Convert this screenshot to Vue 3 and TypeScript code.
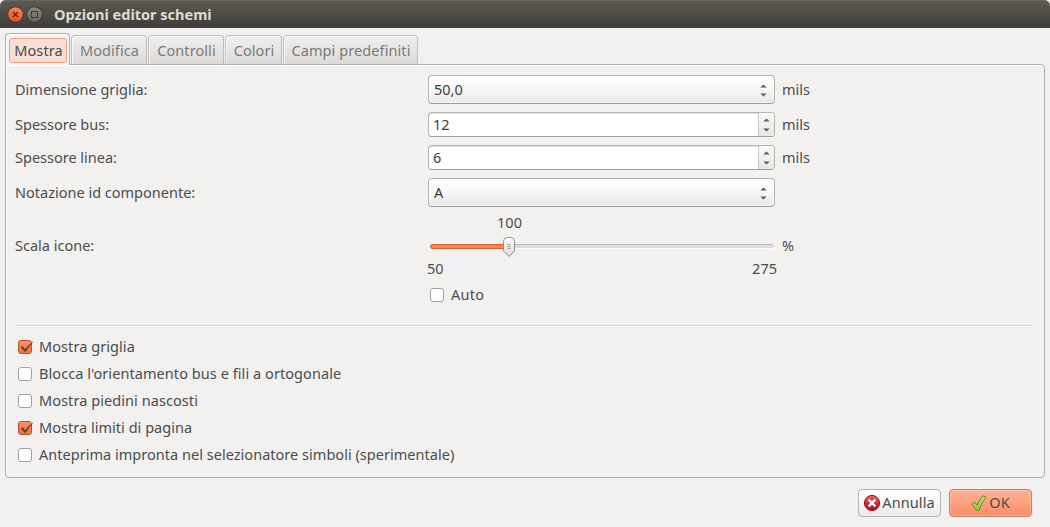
<script setup lang="ts">
import { ref } from 'vue'

interface Tab { key: string; label: string }
interface Field { key: string; label: string; value: string; kind: 'combo' | 'spin'; unit?: string }
interface Option { key: string; label: string; checked: boolean }

const tabs: Tab[] = [
  { key: 'mostra', label: 'Mostra' },
  { key: 'modifica', label: 'Modifica' },
  { key: 'controlli', label: 'Controlli' },
  { key: 'colori', label: 'Colori' },
  { key: 'campi', label: 'Campi predefiniti' },
]
const active = ref('mostra')

const fields: Field[] = [
  { key: 'griglia', label: 'Dimensione griglia:', value: '50,0', kind: 'combo', unit: 'mils' },
  { key: 'bus', label: 'Spessore bus:', value: '12', kind: 'spin', unit: 'mils' },
  { key: 'linea', label: 'Spessore linea:', value: '6', kind: 'spin', unit: 'mils' },
  { key: 'notazione', label: 'Notazione id componente:', value: 'A', kind: 'combo' },
]

const auto = ref(false)
const options = ref<Option[]>([
  { key: 'o-griglia', label: 'Mostra griglia', checked: true },
  { key: 'o-blocca', label: "Blocca l'orientamento bus e fili a ortogonale", checked: false },
  { key: 'o-piedini', label: 'Mostra piedini nascosti', checked: false },
  { key: 'o-limiti', label: 'Mostra limiti di pagina', checked: true },
  { key: 'o-anteprima', label: 'Anteprima impronta nel selezionatore simboli (sperimentale)', checked: false },
])
</script>

<template>
  <div class="window">
    <header class="titlebar">
      <svg class="controls" width="42" height="20" viewBox="0 0 42 20">
        <defs>
          <linearGradient id="close-fill" x1="0" y1="0" x2="0" y2="1">
            <stop offset="0" stop-color="#f58560" /><stop offset="1" stop-color="#e2501f" />
          </linearGradient>
          <linearGradient id="max-fill" x1="0" y1="0" x2="0" y2="1">
            <stop offset="0" stop-color="#8b887f" /><stop offset="1" stop-color="#6a675f" />
          </linearGradient>
        </defs>
        <circle cx="10.5" cy="10.5" r="8" fill="#34332f" />
        <circle cx="10.5" cy="10.5" r="7.3" fill="url(#close-fill)" />
        <path d="M8 8l5 5M13 8l-5 5" stroke="#5a2412" stroke-width="1.3" />
        <circle cx="29.5" cy="10.5" r="8" fill="#34332f" />
        <circle cx="29.5" cy="10.5" r="7.3" fill="url(#max-fill)" />
        <rect x="26.5" y="7.5" width="6" height="6" fill="none" stroke="#3b3935" />
      </svg>
      <h1 class="title">Opzioni editor schemi</h1>
    </header>

    <main class="content">
      <nav class="tabs">
        <button
          v-for="t in tabs" :key="t.key" type="button"
          :class="['tab', t.key, { active: active === t.key }]" @click="active = t.key"
        >
          <span class="tab-label">{{ t.label }}</span>
        </button>
      </nav>

      <section class="panel">
        <div class="form">
          <div v-for="f in fields" :key="f.key" :class="['row', f.kind]">
            <span class="label">{{ f.label }}</span>
            <div class="control">
              <span class="value">{{ f.value }}</span>
              <span class="stepper">
                <svg v-if="f.kind === 'combo'" width="7" height="13" viewBox="0 0 7 13">
                  <path d="M.3 3.6L3.5.4 6.7 3.6zM.3 9.4h6.4L3.5 12.6z" fill="#5c5c5c" />
                </svg>
                <svg v-else width="7" height="14" viewBox="0 0 7 14">
                  <path d="M.3 3.6L3.5.4 6.7 3.6zM.3 10.4h6.4L3.5 13.6z" fill="#5c5c5c" />
                </svg>
              </span>
            </div>
            <span v-if="f.unit" class="unit">{{ f.unit }}</span>
          </div>

          <div class="row scale">
            <span class="label">Scala icone:</span>
            <div class="slider">
              <div class="current">100</div>
              <svg class="track" width="347" height="23" viewBox="0 0 347 23">
                <defs>
                  <linearGradient id="thumb-fill" x1="0" y1="0" x2="0" y2="1">
                    <stop offset="0" stop-color="#ffffff" /><stop offset="1" stop-color="#dddbd9" />
                  </linearGradient>
                </defs>
                <rect x="2" y="9" width="344" height="4.5" rx="2" fill="#dedcda" />
                <path d="M4 9.5h341" stroke="#bdbab7" />
                <path d="M4 13.5h341" stroke="#fbfbfa" />
                <rect x="2.5" y="9.5" width="80" height="4" rx="2" fill="#f78557" stroke="#d9602f" />
                <path
                  d="M75.5 6.5Q75.5 2.5 79.5 2.5H82.5Q86.5 2.5 86.5 6.5V16L81 21.5 75.5 16Z"
                  fill="url(#thumb-fill)" stroke="#928f8c"
                />
                <path d="M79 9.5h4M79 11.5h4M79 13.5h4" stroke="#aaa7a4" />
              </svg>
              <div class="range"><span>50</span><span>275</span></div>
            </div>
            <span class="unit">%</span>
          </div>

          <label class="check auto">
            <input v-model="auto" type="checkbox">
            <span class="box" />
            <span class="text">Auto</span>
          </label>
        </div>

        <hr class="separator">

        <div class="options">
          <label v-for="o in options" :key="o.key" :class="['check', o.key]">
            <input v-model="o.checked" type="checkbox">
            <span :class="['box', { on: o.checked }]">
              <svg v-if="o.checked" width="16" height="15" viewBox="0 0 16 15">
                <path d="M2.6 7.2L4.8 6.2 7.1 9.3Q10.2 4.6 15.8 1.2 11.2 6 7.9 11.6L6.6 11.8Z" fill="#6b3a2b" />
              </svg>
            </span>
            <span class="text">{{ o.label }}</span>
          </label>
        </div>
      </section>

      <footer class="actions">
        <button type="button" class="btn cancel">
          <svg width="18" height="18" viewBox="0 0 18 18">
            <defs>
              <linearGradient id="stop-fill" x1="0" y1="0" x2="0" y2="1">
                <stop offset="0" stop-color="#ef6262" /><stop offset=".5" stop-color="#d02c3a" /><stop offset="1" stop-color="#a80f2c" />
              </linearGradient>
            </defs>
            <circle cx="9" cy="9" r="7.6" fill="url(#stop-fill)" stroke="#98162d" />
            <path d="M6.5 6.5l5 5M11.5 6.5l-5 5" stroke="#fff" stroke-width="2.4" stroke-linecap="square" />
          </svg>
          <span class="text">Annulla</span>
        </button>
        <button type="button" class="btn ok">
          <svg width="16" height="18" viewBox="0 0 16 18">
            <defs>
              <linearGradient id="ok-fill" x1="0" y1="0" x2="0" y2="1">
                <stop offset="0" stop-color="#d3e785" /><stop offset="1" stop-color="#98c53a" />
              </linearGradient>
            </defs>
            <path
              d="M1 10.2L4 8.2 6.2 11.3Q8.6 5.5 12 1.7L15 3.2Q10.4 8.2 8 16.2L5.3 16.4Z"
              fill="url(#ok-fill)" stroke="#628c20" stroke-linejoin="round"
            />
          </svg>
          <span class="text">OK</span>
        </button>
      </footer>
    </main>
  </div>
</template>

<style>
body { background: #f2f1f0; }
</style>

<style scoped>
* { box-sizing: border-box; }
.window {
  display: flex;
  flex-direction: column;
  width: 1050px;
  height: 527px;
  overflow: hidden;
  background: #f2f1f0;
  color: #4c4c4c;
  font: 14.5px/20px "Noto Sans", "Open Sans", sans-serif;
  white-space: nowrap;
}
button { margin: 0; color: inherit; font: inherit; }
.titlebar {
  display: flex;
  flex: none;
  align-items: center;
  gap: 7px;
  height: 28px;
  padding: 1px 0 0 5px;
  border-radius: 6px 6px 0 0;
  background: linear-gradient(#5d5a52, #3e3d39);
  box-shadow: inset 0 1px #6d6a61;
}
.controls { margin-top: -1px; }
.title { margin: 0; padding-bottom: 2px; color: #dfdbd2; font-size: 14.5px; font-weight: 700; line-height: 20px; }
.content { display: flex; flex: 1; flex-direction: column; padding: 5px 5px 0; }
.tabs { display: flex; align-items: flex-end; gap: 1px; height: 32px; margin-bottom: -1px; z-index: 1; }
.tab {
  height: 30px;
  padding: 0 0 0 1px;
  border: 1px solid #c0bebb;
  border-bottom-color: #b2afac;
  border-radius: 4px 4px 0 0;
  background: linear-gradient(#f0efee, #dcdad8);
  box-shadow: inset 1px 1px #f7f6f6;
  color: #7b7a78;
  letter-spacing: .08px;
  text-align: center;
}
.tab.active {
  height: 32px;
  padding: 3px 2px 2px;
  border-color: #b2afac;
  border-bottom: 0;
  background: #f5f4f3;
  box-shadow: inset 1px 1px #fff;
  color: #4c4c4c;
}
.tab-label { display: block; }
.active .tab-label {
  height: 25px;
  margin: 0 0 0 1px;
  padding-left: 1px;
  border: 1px solid #f0a083;
  border-radius: 3px;
  background: #f8ded5;
  line-height: 22px;
}
.mostra { width: 65px; }
.modifica { width: 76px; }
.controlli { width: 76px; }
.colori { width: 57px; }
.campi { width: 135px; }
.panel {
  height: 414px;
  padding: 10px 9px 0;
  border: 1px solid #b2afac;
  border-radius: 0 4px 4px 4px;
  box-shadow: inset 1px 1px #fff;
}
.form { display: flex; flex-direction: column; gap: 8px; }
.row { display: grid; grid-template-columns: 413px 347px auto; align-items: center; }
.combo { height: 29px; }
.spin { height: 25px; }
.label, .unit, .value, .text { padding-bottom: 2px; }
.control {
  display: flex;
  align-items: stretch;
  height: 100%;
  border: 1px solid #b5b2af;
  border-bottom-color: #9f9c99;
  border-radius: 4px;
  color: #3c3c3c;
}
.combo .control { background: linear-gradient(#fff, #f7f7f6 50%, #e9e8e7); box-shadow: inset 0 0 0 1px #ffffff80; }
.spin .control { background: #fff; box-shadow: inset 0 1px #e0dfde; }
.value { flex: 1; align-self: center; padding-left: 5px; }
.spin .value { padding-left: 4px; }
.stepper { display: flex; align-items: center; justify-content: center; width: 16px; }
.combo .stepper { width: 21px; padding-top: 1px; }
.spin .stepper { border-left: 1px solid #cbc9c6; border-radius: 0 3px 3px 0; background: linear-gradient(#fbfbfb, #e6e5e4); }
.unit { padding-left: 7px; }
.scale { height: 64px; }
.slider { display: flex; flex-direction: column; height: 64px; }
.current { width: 163px; height: 20px; margin-top: -3px; text-align: center; }
.track { display: block; margin-top: 3px; }
.range { display: flex; justify-content: space-between; margin: 0 -2px 0 -1px; }
.scale .label, .scale .unit { padding-bottom: 4px; }
.check { display: flex; align-items: center; gap: 7px; height: 20px; }
.check input { display: none; }
.box {
  display: block;
  flex: none;
  width: 14px;
  height: 14px;
  border: 1px solid #a3a09d;
  border-radius: 3px;
  background: #fff;
}
.box.on { border-color: #b6512d; background: linear-gradient(#f99168, #ee7241); }
.box svg { display: block; margin: -1px; overflow: visible; }
.auto { margin: -2px 0 0 415px; letter-spacing: .3px; }
.o-griglia, .o-piedini { letter-spacing: .07px; }
.o-blocca { letter-spacing: .065px; }
.o-limiti { letter-spacing: .03px; }
.o-anteprima { letter-spacing: .025px; }
.separator { height: 2px; margin: 20px 2px 0 1px; border: 0; border-top: 1px solid #d8d6d3; background: #fafafa; }
.options { display: flex; flex-direction: column; gap: 7px; padding: 10px 0 0 3px; }
.actions { display: flex; gap: 8px; justify-content: flex-end; padding: 11px 13px 0 0; }
.btn {
  display: flex;
  align-items: center;
  justify-content: center;
  width: 83px;
  height: 28px;
  padding: 0;
  border: 1px solid #b5b2af;
  border-radius: 4px;
  background: linear-gradient(#fff, #ecebea);
}
.btn svg { margin-bottom: 1px; }
.btn.cancel { gap: 1px; padding-right: 1px; letter-spacing: .1px; }
.btn.ok { gap: 2px; border-color: #b98672; background: linear-gradient(#fdb397, #f88e66); box-shadow: inset 0 0 0 1px #ffffff30; }
</style>
